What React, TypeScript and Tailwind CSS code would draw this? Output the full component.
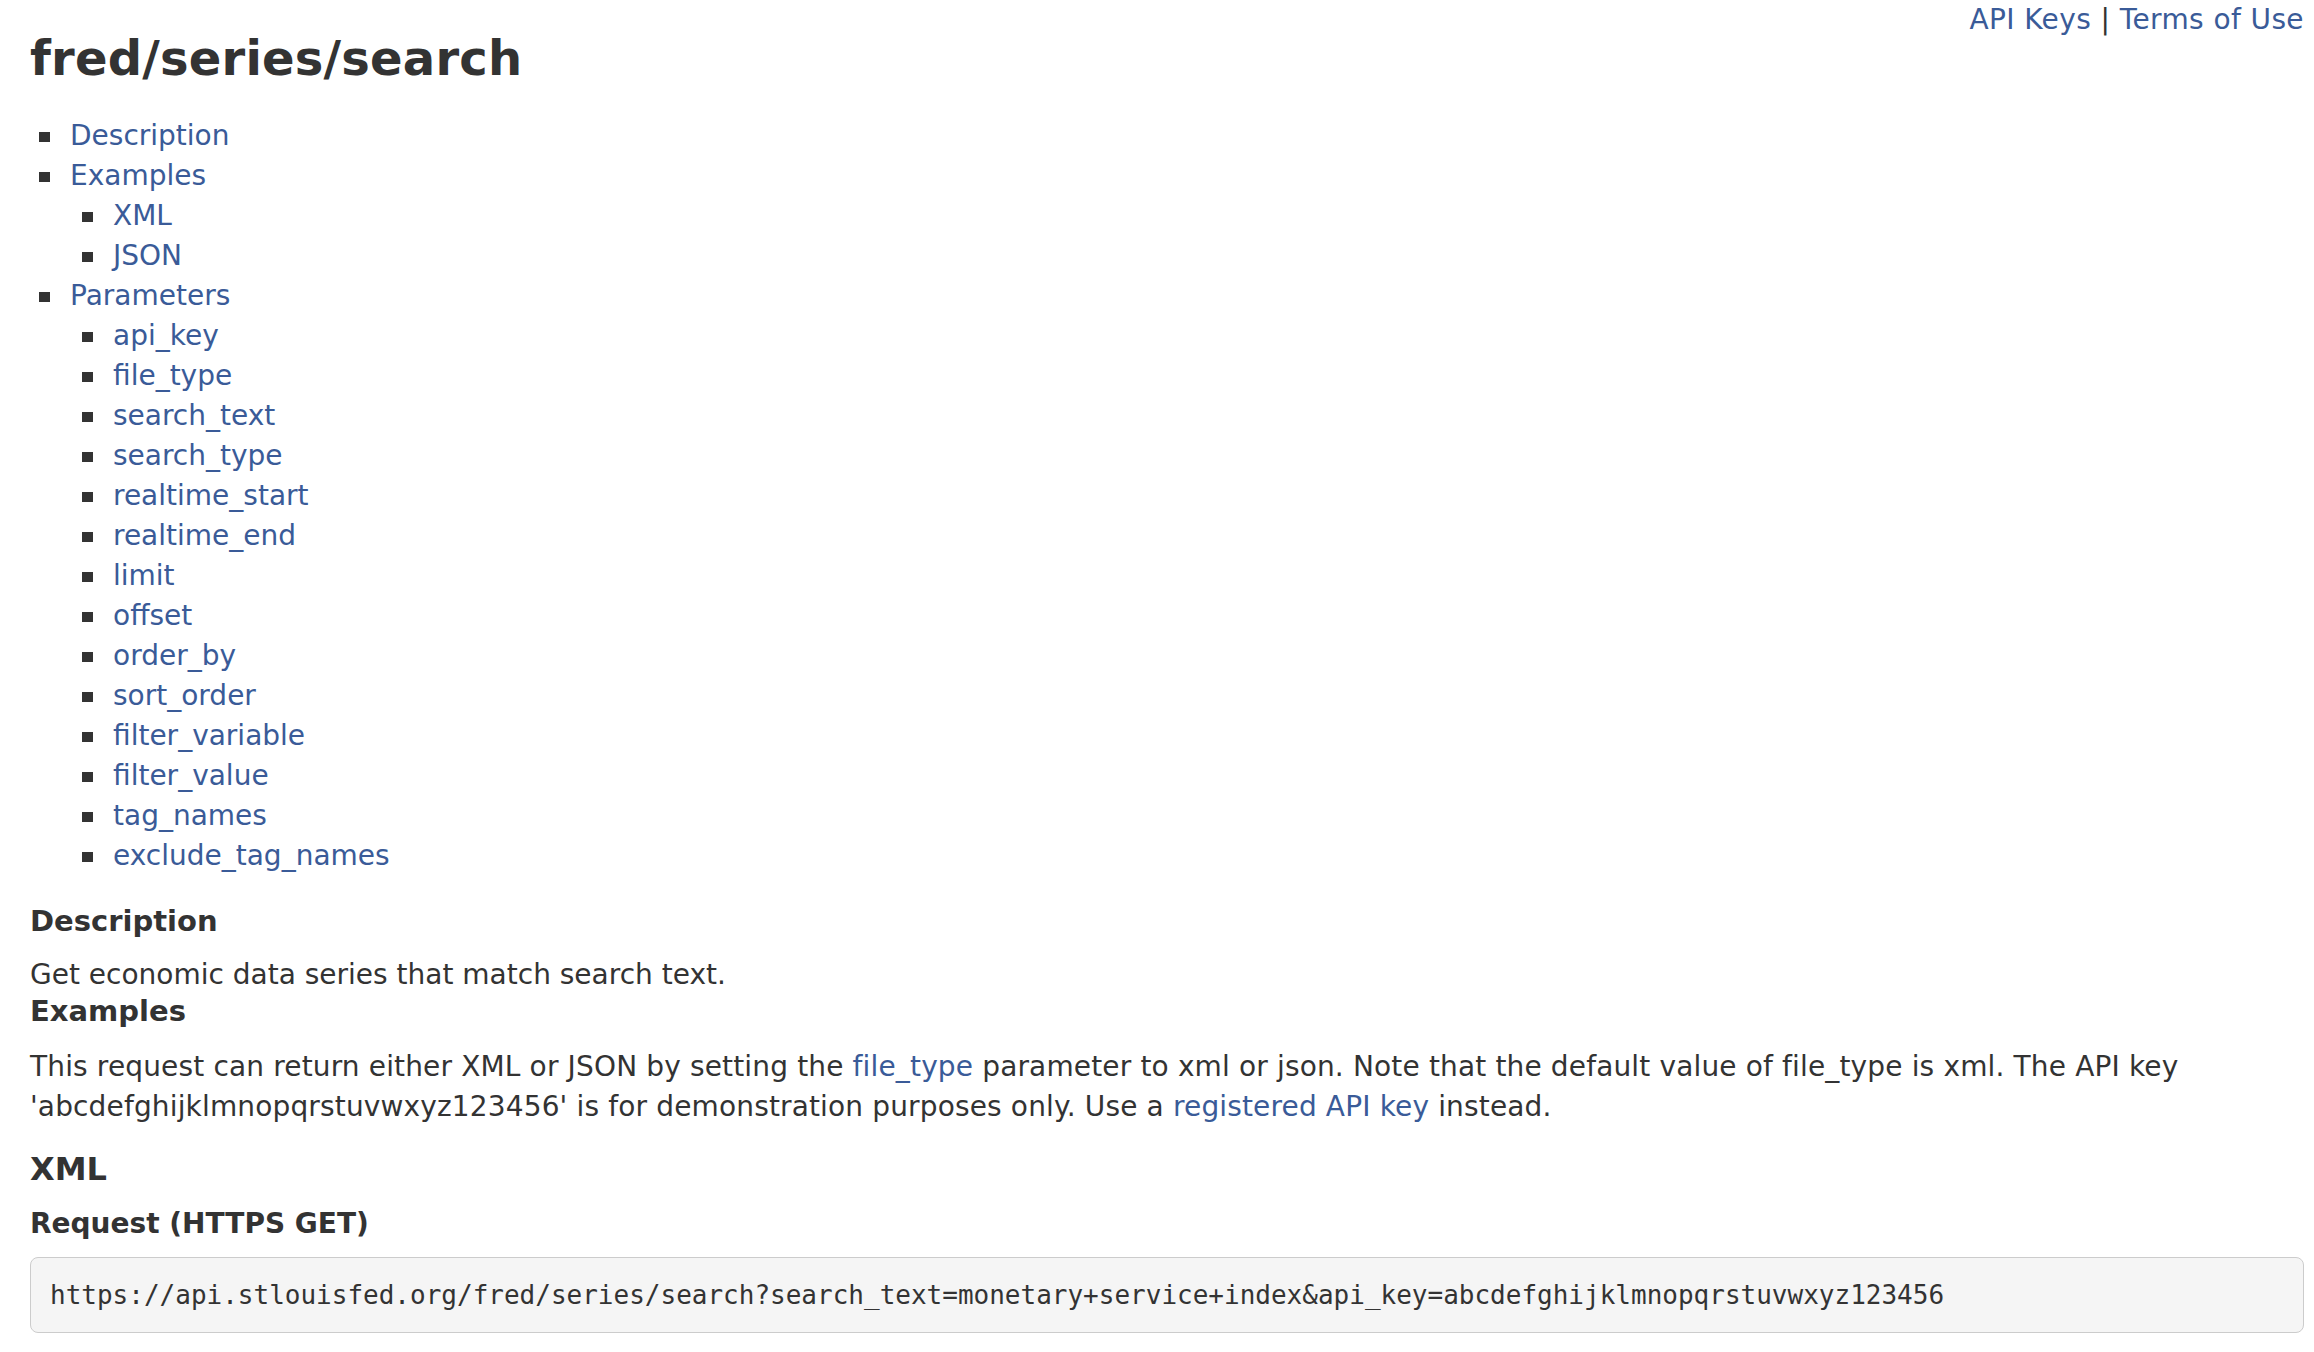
const sans = { fontFamily: '"DejaVu Sans", Verdana, sans-serif' };

const toc = [
  { label: "Description" },
  { label: "Examples", children: ["XML", "JSON"] },
  {
    label: "Parameters",
    children: [
      "api_key",
      "file_type",
      "search_text",
      "search_type",
      "realtime_start",
      "realtime_end",
      "limit",
      "offset",
      "order_by",
      "sort_order",
      "filter_variable",
      "filter_value",
      "tag_names",
      "exclude_tag_names",
    ],
  },
];

function A({ children }: { children: React.ReactNode }) {
  return (
    <a href="#" className="text-[#3a5b98] no-underline">
      {children}
    </a>
  );
}

// square bullet, drawn bigger than the browser's own marker
const bullet =
  "relative before:absolute before:left-[-31px] before:top-[16px] before:h-[10px] before:w-[11px] before:bg-[#333333] before:content-['']";

export default function App() {
  return (
    <div
      className="flow-root min-h-screen bg-white pl-[30px] pr-[10px] text-[28px] leading-[40px] text-[#333333]"
      style={sans}
    >
      <div className="float-right leading-[40px] tracking-[0.4px]">
        <A>API Keys</A> | <A>Terms of Use</A>
      </div>

      <h1 className="mt-[32px] text-[48px] font-bold leading-[53px] tracking-[0.2px]">
        fred/series/search
      </h1>

      <ul className="mt-[31px] list-none pl-10">
        {toc.map((item) => (
          <li key={item.label} className={bullet}>
            <A>{item.label}</A>
            {item.children && (
              <ul className="list-none pl-[43px]">
                {item.children.map((c) => (
                  <li key={c} className={bullet}>
                    <A>{c}</A>
                  </li>
                ))}
              </ul>
            )}
          </li>
        ))}
      </ul>

      <h4 className="mt-[29px] text-[29px] font-bold leading-[32px]">
        Description
      </h4>
      <p className="mt-[18px]">Get economic data series that match search text.</p>

      <h4 className="text-[29px] font-bold leading-[32px]">Examples</h4>
      <p className="mt-[20px] tracking-[0.15px]">
        This request can return either XML or JSON by setting the <A>file_type</A>{" "}
        parameter to xml or json. Note that the default value of file_type is xml. The
        API key 'abcdefghijklmnopqrstuvwxyz123456' is for demonstration purposes only.
        Use a <A>registered API key</A> instead.
      </p>

      <h3 className="mt-[25px] text-[32px] font-bold leading-[35px]">XML</h3>
      <h4 className="mt-[21px] text-[28px] font-bold leading-[31px]">
        Request (HTTPS GET)
      </h4>
      <pre
        className="mt-[18px] rounded-[8px] border border-[#cccccc] bg-[#f5f5f5] px-[19px] py-[18px] text-[26px] leading-[38px] text-[#333333]"
        style={{ fontFamily: '"DejaVu Sans Mono", Menlo, monospace' }}
      >
        https://api.stlouisfed.org/fred/series/search?search_text=monetary+service+index&amp;api_key=abcdefghijklmnopqrstuvwxyz123456
      </pre>
    </div>
  );
}
